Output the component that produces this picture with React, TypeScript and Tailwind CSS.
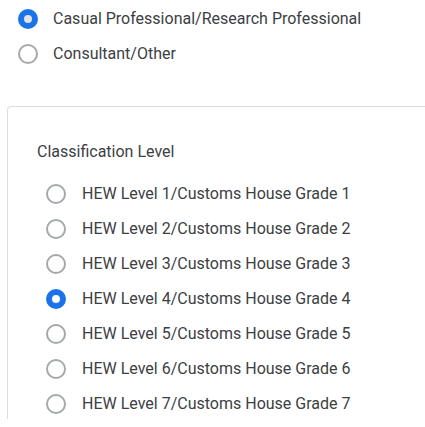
import React from 'react';

type RadioProps = {
    label: string;
    checked?: boolean;
    dot?: string;
    gap: string;
};

const Radio: React.FC<RadioProps> = ({ label, checked, dot = 'bg-white', gap }) => (
    <label className={`flex items-center h-[35px] ${gap} cursor-pointer`}>
        {checked ? (
            <span className={`w-[20px] h-[20px] rounded-full border-[6px] border-[#1a73e8] ${dot} shrink-0`} />
        ) : (
            <span className="w-[20px] h-[20px] rounded-full border-2 border-[#a5a9ad] bg-white shrink-0" />
        )}
        <span className="text-[16px] leading-5 text-[#3c4043]">{label}</span>
    </label>
);

const levels = [1, 2, 3, 4, 5, 6, 7];

export default function App() {
    return (
        <div className="h-[427px] w-[425px] bg-white overflow-hidden" style={{ fontFamily: 'Roboto, "Liberation Sans", sans-serif' }}>
            <div className="h-[419px] overflow-hidden">
                <div className="pt-[1px] pl-[18px]">
                    <Radio label="Casual Professional/Research Professional" checked dot="bg-[#e3e3e3]" gap="gap-[15px]" />
                    <Radio label="Consultant/Other" gap="gap-[15px]" />
                </div>

                <div className="mt-[35px] ml-[7px] w-[440px] h-[400px] border border-[#dadce0] rounded-[4px] pt-[35px] pl-[29px]">
                    <p className="text-[16px] leading-5 text-[#3c4043]">Classification Level</p>
                    <div className="mt-[14px] pl-[9px]">
                        {levels.map(n => (
                            <Radio
                                key={n}
                                label={`HEW Level ${n}/Customs House Grade ${n}`}
                                checked={n === 4}
                                gap="gap-[16px]"
                            />
                        ))}
                    </div>
                </div>
            </div>
        </div>
    );
}
